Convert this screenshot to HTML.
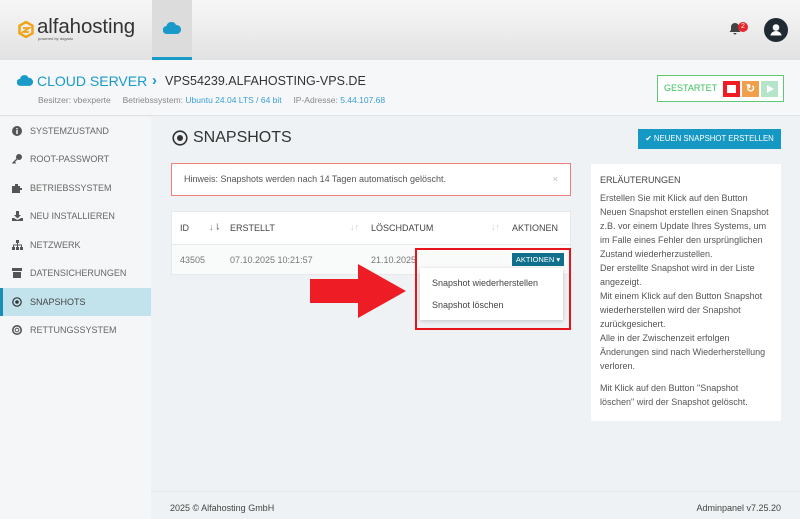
<!DOCTYPE html>
<html><head><meta charset="utf-8"><style>
*{box-sizing:border-box;margin:0;padding:0}
body{width:800px;height:519px;overflow:hidden;font-family:"Liberation Sans",Arial,sans-serif;background:#eef2f4;position:relative;color:#555}
.abs{position:absolute}
.hdr{left:0;top:0;width:800px;height:60px;background:linear-gradient(#f7f7f7,#e2e2e2);box-shadow:0 1px 3px rgba(0,0,0,.15)}
.sub{left:0;top:60px;width:800px;height:56px;background:#f6f7f8;border-bottom:1px solid #e0e3e5}
.side{left:0;top:117px;width:151px;height:402px;background:#f5f6f7}
.si{position:absolute;left:0;width:151px;height:28px;font-size:9px;color:#666;line-height:28px;padding-left:30px}
.si svg{position:absolute;left:12px;top:9px}
.act{background:#c3e3ec;border-left:3px solid #1a8fb5;padding-left:27px}
.act svg{left:9px}
</style></head><body>
<div class="abs hdr"></div>
<div class="abs" style="left:152px;top:0;width:40px;height:60px;background:#dcdcdc;border-bottom:3px solid #1a9ac8"></div>
<svg class="abs" style="left:163px;top:22px" width="18" height="12" viewBox="0 0 18 12"><path d="M4 12a4 4 0 0 1-.5-8A5 5 0 0 1 13 3a4.5 4.5 0 0 1 1 9z" fill="#1a9ac8"/></svg>
<svg class="abs" style="left:18px;top:21px" width="16" height="17" viewBox="0 0 16 17"><path d="M8 1l6.5 3.7v7.6L8 16 1.5 12.3V4.7z" fill="none" stroke="#f0a417" stroke-width="2.5"/><path d="M5 7h6l-6 4h6" fill="none" stroke="#f0a417" stroke-width="1.8"/></svg>
<div class="abs" style="left:37px;top:15px;font-size:20.5px;color:#333;letter-spacing:-.1px">alfahosting</div>
<div class="abs" style="left:38px;top:36px;font-size:4px;color:#555">powered by dogado</div>
<svg class="abs" style="left:729px;top:22px" width="12" height="13" viewBox="0 0 12 13"><path d="M6 1a4 4 0 0 1 4 4v3l1.5 2H.5L2 8V5a4 4 0 0 1 4-4zM4.5 11h3a1.5 1.5 0 0 1-3 0z" fill="#444"/></svg>
<div class="abs" style="left:738px;top:22px;width:10px;height:10px;border-radius:5px;background:#e8252a;color:#fff;font-size:7px;text-align:center;line-height:10px">2</div>
<div class="abs" style="left:764px;top:18px;width:24px;height:24px;border-radius:12px;background:#1f2a33"></div>
<svg class="abs" style="left:764px;top:18px" width="24" height="24" viewBox="0 0 24 24"><circle cx="12" cy="9.5" r="3.3" fill="#fff"/><path d="M6.5 17.5a5.5 4.5 0 0 1 11 0z" fill="#fff"/></svg>

<div class="abs sub"></div>
<svg class="abs" style="left:17px;top:75px" width="16" height="11" viewBox="0 0 18 12"><path d="M4 12a4 4 0 0 1-.5-8A5 5 0 0 1 13 3a4.5 4.5 0 0 1 1 9z" fill="#1a9ac8"/></svg>
<div class="abs" style="left:37px;top:73px;font-size:14px;color:#1a9ac8;white-space:nowrap">CLOUD SERVER</div>
<div class="abs" style="left:152px;top:72px;font-size:15px;color:#1a9ac8;font-weight:bold">›</div>
<div class="abs" style="left:165px;top:74px;font-size:12.5px;color:#333">VPS54239.ALFAHOSTING-VPS.DE</div>
<div class="abs" style="left:38px;top:95px;font-size:8.5px;color:#888;white-space:nowrap">Besitzer: vbexperte &nbsp;&nbsp;&nbsp; Betriebssystem: <span style="color:#3b9fd8">Ubuntu 24.04 LTS / 64 bit</span> &nbsp;&nbsp;&nbsp; IP-Adresse: <span style="color:#3b9fd8">5.44.107.68</span></div>
<div class="abs" style="left:657px;top:75px;width:127px;height:27px;border:1.5px solid #5cc878;background:#fff"></div>
<div class="abs" style="left:664px;top:83px;font-size:9px;color:#3bbf5c">GESTARTET</div>
<div class="abs" style="left:723px;top:81px;width:17px;height:16px;background:#f01c24"><div style="margin:4px;width:9px;height:8px;background:#fff"></div></div>
<div class="abs" style="left:742px;top:81px;width:17px;height:16px;background:#f0a04a;color:#fff;font-size:11px;text-align:center;line-height:16px;font-weight:bold">↻</div>
<div class="abs" style="left:761px;top:81px;width:17px;height:16px;background:#b5e4cb"><svg width="17" height="16"><path d="M6 4l7 4-7 4z" fill="#fff"/></svg></div>

<div class="abs side"></div>
<div class="si" style="top:117px"><svg width="10" height="10"><circle cx="5" cy="5" r="5" fill="#555"/><rect x="4.3" y="4" width="1.4" height="4" fill="#fff"/><rect x="4.3" y="2" width="1.4" height="1.3" fill="#fff"/></svg>SYSTEMZUSTAND</div>
<div class="si" style="top:145px"><svg width="10" height="10"><circle cx="7" cy="3" r="3" fill="#555"/><path d="M5 4L0 9l1 1 1-1 1 1 1-1-1-1 2-2z" fill="#555"/></svg>ROOT-PASSWORT</div>
<div class="si" style="top:174px"><svg width="11" height="10"><path d="M0 3h3V1h3v2h2v2h2v2H8v3H0z" fill="#555"/></svg>BETRIEBSSYSTEM</div>
<div class="si" style="top:202px"><svg width="11" height="10"><path d="M4 0h3v4h2L5.5 7.5 2 4h2zM0 7h2l3.5 2L9 7h2v3H0z" fill="#555"/></svg>NEU INSTALLIEREN</div>
<div class="si" style="top:231px"><svg width="11" height="10"><rect x="4" y="0" width="3" height="3" fill="#555"/><rect x="0" y="7" width="3" height="3" fill="#555"/><rect x="4" y="7" width="3" height="3" fill="#555"/><rect x="8" y="7" width="3" height="3" fill="#555"/><path d="M5.5 3v4M1.5 7V5h8v2" stroke="#555" fill="none"/></svg>NETZWERK</div>
<div class="si" style="top:259px"><svg width="10" height="10"><rect x="0" y="0" width="10" height="3" fill="#555"/><rect x="1" y="4" width="8" height="6" fill="#555"/></svg>DATENSICHERUNGEN</div>
<div class="si act" style="top:288px"><svg width="10" height="10"><circle cx="5" cy="5" r="4.2" fill="none" stroke="#333" stroke-width="1.2"/><circle cx="5" cy="5" r="1.8" fill="#333"/></svg><span style="color:#444">SNAPSHOTS</span></div>
<div class="si" style="top:316px"><svg width="10" height="10"><circle cx="5" cy="5" r="4.2" fill="none" stroke="#555" stroke-width="1.6"/><circle cx="5" cy="5" r="1.8" fill="none" stroke="#555"/></svg>RETTUNGSSYSTEM</div>

<svg class="abs" style="left:172px;top:130px" width="16" height="16"><circle cx="8" cy="8" r="6.8" fill="none" stroke="#333" stroke-width="1.6"/><circle cx="8" cy="8" r="3" fill="#333"/></svg>
<div class="abs" style="left:193px;top:129px;font-size:16px;color:#333">SNAPSHOTS</div>
<div class="abs" style="left:638px;top:129px;width:143px;height:20px;background:#1598c4;color:#fff;font-size:7.8px;line-height:20px;text-align:center;white-space:nowrap">✔ NEUEN SNAPSHOT ERSTELLEN</div>

<div class="abs" style="left:171px;top:163px;width:400px;height:33px;background:#fff;border:1px solid #f08080;font-size:9px;color:#555;line-height:31px;padding-left:12px">Hinweis: Snapshots werden nach 14 Tagen automatisch gelöscht.<span style="position:absolute;right:12px;color:#bbb">×</span></div>

<div class="abs" style="left:171px;top:211px;width:400px;height:64px;background:#fff;border:1px solid #e6e9eb"></div>
<div class="abs" style="left:171px;top:244px;width:400px;height:31px;background:#f9fafa;border:1px solid #e6e9eb"></div>
<div class="abs" style="top:223px;left:180px;font-size:9px;color:#444">ID</div>
<div class="abs" style="top:222px;left:209px;font-size:9px;color:#777">↓⇂</div>
<div class="abs" style="top:223px;left:230px;font-size:9px;color:#444">ERSTELLT</div>
<div class="abs" style="top:222px;left:350px;font-size:9px;color:#ccc">↓↑</div>
<div class="abs" style="top:223px;left:371px;font-size:9px;color:#444">LÖSCHDATUM</div>
<div class="abs" style="top:222px;left:491px;font-size:9px;color:#ccc">↓↑</div>
<div class="abs" style="top:223px;left:512px;font-size:9px;color:#444">AKTIONEN</div>
<div class="abs" style="top:255px;left:180px;font-size:9px;color:#777">43505</div>
<div class="abs" style="top:255px;left:230px;font-size:9px;color:#777">07.10.2025 10:21:57</div>
<div class="abs" style="top:255px;left:371px;font-size:9px;color:#777">21.10.2025</div>
<div class="abs" style="left:512px;top:253px;width:52px;height:13px;background:#0f6f8c;color:#fff;font-size:7.5px;line-height:13px;text-align:center">AKTIONEN ▾</div>
<div class="abs" style="left:420px;top:268px;width:143px;height:52px;background:#fff;box-shadow:0 1px 4px rgba(0,0,0,.2);font-size:9px;color:#444"><div style="position:absolute;left:12px;top:10px">Snapshot wiederherstellen</div><div style="position:absolute;left:12px;top:32px">Snapshot löschen</div></div>
<div class="abs" style="left:415px;top:248px;width:156px;height:82px;border:2px solid #e8141c"></div>
<svg class="abs" style="left:308px;top:262px" width="100" height="58"><path d="M2 17h48V2l48 27-48 27V41H2z" fill="#ee1c24"/></svg>

<div class="abs" style="left:591px;top:164px;width:190px;height:257px;background:#fff;padding:9px 12px 0 9px;font-size:9px;line-height:14px;color:#555">
<div style="color:#444;font-size:9px;margin-bottom:4px">ERLÄUTERUNGEN</div>
Erstellen Sie mit Klick auf den Button Neuen Snapshot erstellen einen Snapshot z.B. vor einem Update Ihres Systems, um im Falle eines Fehler den ursprünglichen Zustand wiederherzustellen.<br>Der erstellte Snapshot wird in der Liste angezeigt.<br>Mit einem Klick auf den Button Snapshot wiederherstellen wird der Snapshot zurückgesichert.<br>Alle in der Zwischenzeit erfolgen Änderungen sind nach Wiederherstellung verloren.<div style="height:8px"></div>Mit Klick auf den Button "Snapshot löschen" wird der Snapshot gelöscht.</div>

<div class="abs" style="left:151px;top:491px;width:649px;height:28px;background:#eef2f4;border-top:1px solid #e3e7e9"></div>
<div class="abs" style="left:170px;top:503px;font-size:9px;color:#444">2025 © Alfahosting GmbH</div>
<div class="abs" style="right:19px;top:503px;font-size:9px;color:#444">Adminpanel v7.25.20</div>
</body></html>
